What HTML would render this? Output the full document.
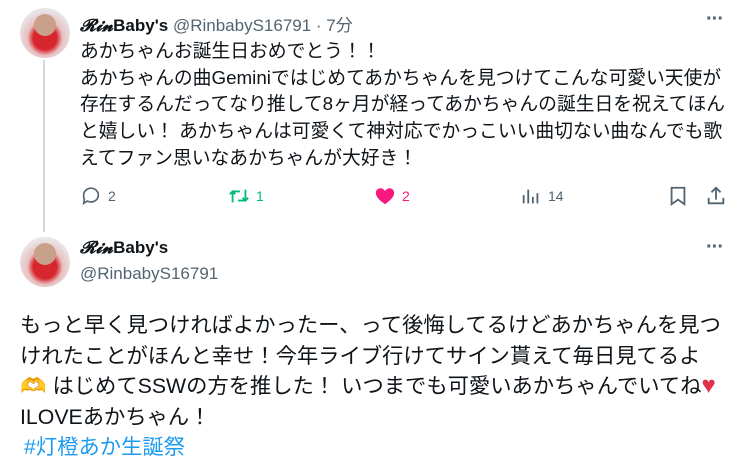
<!DOCTYPE html><html><head><meta charset="utf-8"><style>
*{margin:0;padding:0;box-sizing:border-box}
body{width:750px;height:475px;background:#fff;font-family:"Liberation Sans","Noto Sans CJK JP",sans-serif;color:#0f1419;position:relative;overflow:hidden}
.a{position:absolute}
.av{position:absolute;width:50px;height:50px;border-radius:50%;background:radial-gradient(circle at 50% 60%,#d8262e 0 30%,#e8c0c0 45%,#e9e4e6 70%);overflow:hidden}
.av:after{content:"";position:absolute;left:14px;top:6px;width:22px;height:22px;border-radius:50%;background:#c9a08a}
.t1{left:80px;top:38px;font-size:18.8px;line-height:26.7px;white-space:nowrap}
.t2{left:20px;top:310px;font-size:21.3px;line-height:30.5px;white-space:nowrap}
.g{color:#536471}
.ic{position:absolute;top:185px;font-size:14px;color:#536471;display:flex;align-items:center;gap:6px}
.dots{position:absolute;left:706px;font-size:20px;letter-spacing:-1px;color:#536471;font-weight:bold}
</style></head><body>
<div class="av" style="left:20px;top:8px"></div>
<div class="a" style="left:43px;top:60px;width:2px;height:172px;background:#cfd9de"></div>
<div class="a" style="left:80px;top:11px;font-size:17px"><b style="font-family:'Liberation Serif',serif;font-style:italic">𝓡𝓲𝓷</b><b>Baby's</b> <span class="g">@RinbabyS16791 · 7分</span></div>
<div class="dots" style="top:8px">···</div>
<div class="a t1">あかちゃんお誕生日おめでとう！！<br>あかちゃんの曲Geminiではじめてあかちゃんを見つけてこんな可愛い天使が<br>存在するんだってなり推して8ヶ月が経ってあかちゃんの誕生日を祝えてほん<br>と嬉しい！ あかちゃんは可愛くて神対応でかっこいい曲切ない曲なんでも歌<br>えてファン思いなあかちゃんが大好き！</div>
<div class="ic" style="left:80px"><svg width="22" height="22" viewBox="0 0 24 24"><path d="M4 11a8 7.5 0 1 1 4 6.5L4 20l.8-4.3A7.5 7.5 0 0 1 4 11z" fill="none" stroke="#536471" stroke-width="1.8"/></svg>2</div>
<div class="ic" style="left:228px;color:#00ba7c"><svg width="22" height="22" viewBox="0 0 24 24" fill="none" stroke="#00ba7c" stroke-width="2"><path d="M5 19V7h8M2 10l3-3 3 3M19 5v12h-8M22 14l-3 3-3-3"/></svg>1</div>
<div class="ic" style="left:374px;color:#f91880"><svg width="22" height="22" viewBox="0 0 24 24"><path d="M12 21C5 16 2 12.5 2 8.5 2 5.5 4.3 3.5 7 3.5c2 0 3.8 1.2 5 3 1.2-1.8 3-3 5-3 2.7 0 5 2 5 5 0 4-3 7.5-10 12.5z" fill="#f91880"/></svg>2</div>
<div class="ic" style="left:520px"><svg width="22" height="22" viewBox="0 0 24 24" stroke="#536471" stroke-width="2"><path d="M4 20V11M9 20V5M14 20V13M19 20V9"/></svg>14</div>
<div class="ic" style="left:667px"><svg width="22" height="22" viewBox="0 0 24 24" fill="none" stroke="#536471" stroke-width="2"><path d="M5 3h14v18l-7-5-7 5z"/></svg></div>
<div class="ic" style="left:705px"><svg width="22" height="22" viewBox="0 0 24 24" fill="none" stroke="#536471" stroke-width="2"><path d="M12 3v13M7 8l5-5 5 5M4 14v6h16v-6"/></svg></div>
<div class="av" style="left:20px;top:237px"></div>
<div class="a" style="left:80px;top:238px;font-size:17px"><b style="font-family:'Liberation Serif',serif;font-style:italic">𝓡𝓲𝓷</b><b>Baby's</b></div>
<div class="a g" style="left:80px;top:264px;font-size:17px">@RinbabyS16791</div>
<div class="dots" style="top:236px">···</div>
<div class="a t2">もっと早く見つければよかったー、って後悔してるけどあかちゃんを見つ<br>けれたことがほんと幸せ！今年ライブ行けてサイン貰えて毎日見てるよ<br><span style="color:#f5c542">🫶</span> はじめてSSWの方を推した！ いつまでも可愛いあかちゃんでいてね<span style="color:#e0304a;font-size:24px">♥</span><br>ILOVEあかちゃん！<br><span style="color:#1d9bf0;margin-left:4px">#灯橙あか生誕祭</span></div>
</body></html>
